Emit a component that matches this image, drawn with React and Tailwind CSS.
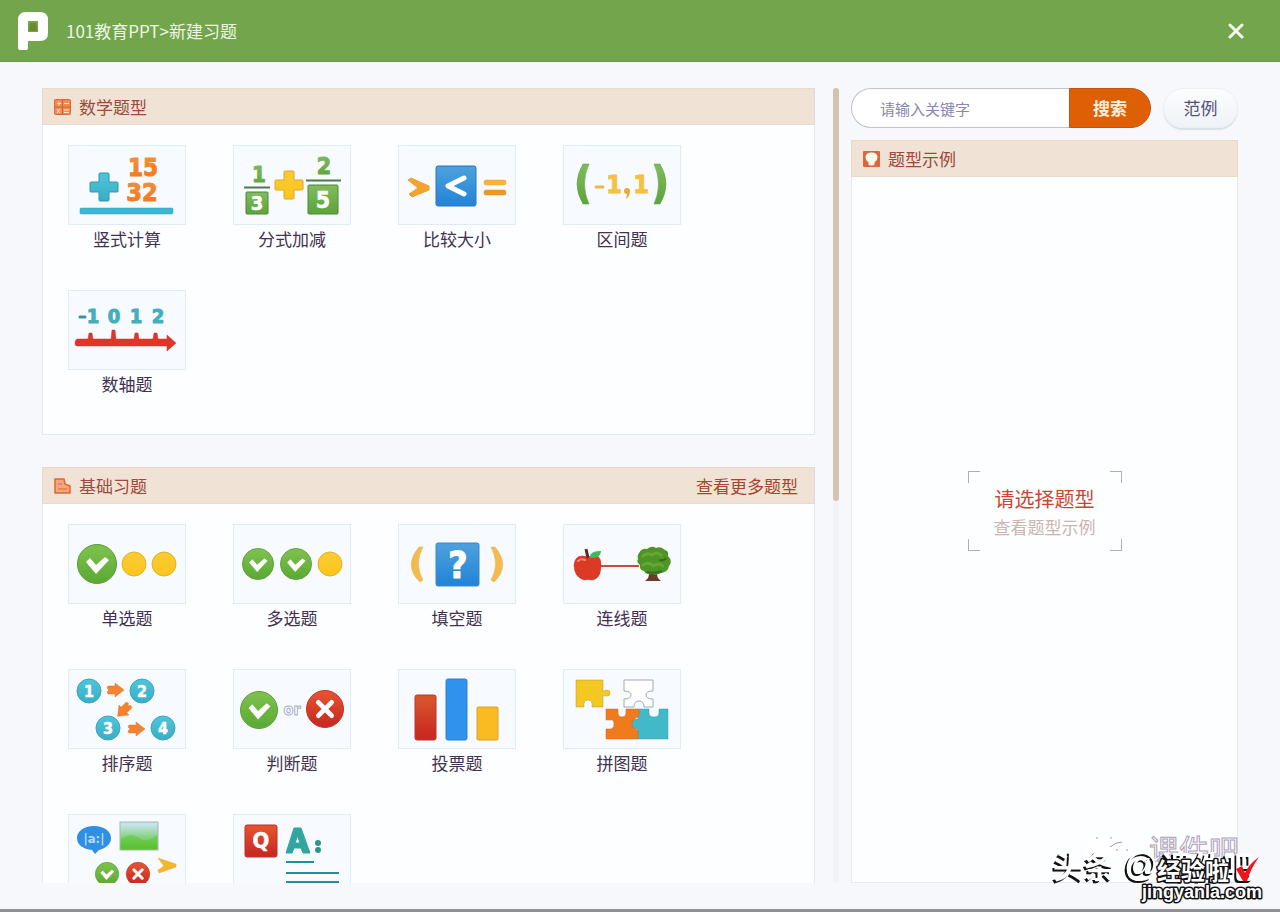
import React, { useState } from 'react'

const digits = { fontFamily: '"DejaVu Sans Condensed", "DejaVu Sans", sans-serif', fontWeight: 700 }

/* ---------- Shared drawing parts ---------- */

const Digit = ({ x, y, size = 20, fill, children, edge = 1 }) => (
    <text
        x={x}
        y={y}
        fontSize={size}
        fill={fill}
        stroke={fill}
        strokeWidth={edge}
        strokeLinejoin="round"
        textAnchor="middle"
        style={digits}
    >
        {children}
    </text>
)

const Plus = ({ x, y, r = 14, fill, stroke }) => (
    <path
        transform={`translate(${x} ${y})`}
        d={`M-5 ${-r + 1}q0-1 1-1h8q1 0 1 1V-5H${r - 1}q1 0 1 1v8q0 1-1 1H5V${r - 1}q0 1-1 1h-8q-1 0-1-1V5H${-r + 1}q-1 0-1-1v-8q0-1 1-1H-5z`}
        fill={fill}
        stroke={stroke}
    />
)

const Check = ({ x, y, r }) => (
    <g transform={`translate(${x} ${y}) scale(${r / 20})`}>
        <circle r="19.5" fill="url(#green)" stroke="#5a9b3c" />
        <path d="M-11-2l4-4 6 7L8-7l4 3-13 14z" fill="#fff" />
    </g>
)

const Cross = ({ x, y, r }) => (
    <g transform={`translate(${x} ${y}) scale(${r / 20})`}>
        <circle r="19.5" fill="url(#red)" stroke="#b8352a" />
        <path d="M-7-7L7 7M7-7L-7 7" stroke="#fff" strokeWidth="5" strokeLinecap="round" />
    </g>
)

const Ball = ({ x, y }) => <circle cx={x} cy={y} r="12" fill="url(#yellow)" stroke="#e2b32a" />

const Step = ({ x, y, n }) => (
    <g>
        <circle cx={x} cy={y} r="12" fill="url(#teal)" stroke="#3fa6bd" />
        <Digit x={x} y={y + 6} size={16} fill="#fff" edge={0.5}>{n}</Digit>
    </g>
)

const StepArrow = ({ x, y, turn = 0 }) => (
    <path
        transform={`translate(${x} ${y}) rotate(${turn})`}
        d="M-8-2l1-2h7v-3l9 7-9 7V4h-7l-1-2 2-2z"
        fill="#f4822f"
        stroke="#e5772a"
        strokeWidth="0.5"
    />
)

/* Gradients used by all of the drawings */
const Gradients = () => (
    <svg width="0" height="0" className="absolute" aria-hidden="true">
        <defs>
            {[
                ['green', '#7cc04c', '#5dab35'],
                ['red', '#e4512f', '#c92a22'],
                ['yellow', '#f9ca34', '#fbc61c'],
                ['teal', '#4cc3d9', '#3bb0c9'],
                ['blue', '#4a9fdc', '#2686d6'],
                ['orange', '#f28e37', '#ef7a22'],
                ['leaf', '#7fb95c', '#5fa63c'],
                ['sky', '#c4e4ea', '#58c22f'],
                ['bar', '#d8532c', '#c92a22'],
            ].map(([id, from, to]) => (
                <linearGradient key={id} id={id} x1="0" y1="0" x2="0" y2="1">
                    <stop offset="0.1" stopColor={from} />
                    <stop offset="0.9" stopColor={to} />
                </linearGradient>
            ))}
        </defs>
    </svg>
)

/* ---------- Question type drawings, 118 x 80 ---------- */

const ColumnSum = () => (
    <>
        <Plus x={36} y={42} fill="url(#teal)" stroke="#3794ac" />
        <Digit x={75} y={31} size={24} fill="url(#orange)">15</Digit>
        <Digit x={74} y={56} size={25} fill="url(#orange)">32</Digit>
        <rect x="12" y="63" width="93" height="6" rx="1" fill="#3db6d3" stroke="#3a9fba" strokeWidth="0.5" />
    </>
)

const Fractions = () => (
    <>
        <Digit x={26} y={37} size={22} fill="url(#leaf)">1</Digit>
        <path d="M11 42.5h26M73 35.5h35" stroke="#4f7a4a" strokeWidth="2" />
        <rect x="13" y="47" width="22" height="22" rx="1" fill="url(#leaf)" stroke="#4d8a35" />
        <Digit x={24} y={65} size={20} fill="#fff" edge={0.5}>3</Digit>
        <Plus x={56} y={40} fill="url(#yellow)" stroke="#dfa52c" />
        <Digit x={91} y={29} size={23} fill="url(#leaf)">2</Digit>
        <rect x="75" y="40" width="30" height="29" rx="1" fill="url(#leaf)" stroke="#4d8a35" />
        <Digit x={90} y={63} size={23} fill="#fff" edge={0.5}>5</Digit>
    </>
)

const Compare = () => (
    <>
        <path d="M10 35l3-2 18 8v4l-17 7-3-3 9-6z" fill="#f5a32d" stroke="#eba134" />
        <rect x="38" y="21" width="40" height="40" rx="2" fill="url(#blue)" stroke="#2b77bd" />
        <path d="M66 33L50 41l16 8" fill="none" stroke="#fff" strokeWidth="5" strokeLinecap="round" strokeLinejoin="round" />
        <rect x="86" y="35" width="22" height="5" rx="2" fill="#f8b33c" stroke="#e5a040" strokeWidth="0.5" />
        <rect x="86" y="45" width="22" height="5" rx="2" fill="#ee9a1f" stroke="#d88c2a" strokeWidth="0.5" />
    </>
)

const Interval = () => (
    <>
        <path d="M20 19h6q-9 20 0 40h-6q-12-20 0-40z" fill="url(#leaf)" stroke="#559a3c" strokeWidth="0.5" />
        <path d="M97 19h-6q9 20 0 40h6q12-20 0-40z" fill="url(#leaf)" stroke="#559a3c" strokeWidth="0.5" />
        <path d="M33 42h7" stroke="#f0b64c" strokeWidth="3" strokeLinecap="round" />
        <Digit x={51} y={48} size={25} fill="#f6c040">1</Digit>
        <path d="M61 46q0-3 3-3t3 3q0 5-4 8l1-5q-3 0-3-3z" fill="#eda838" />
        <Digit x={78} y={48} size={25} fill="#f6c040">1</Digit>
    </>
)

const NumberLine = () => (
    <>
        <path d="M12 27h5" stroke="#3f8f9b" strokeWidth="3" strokeLinecap="round" />
        <Digit x={25} y={33} fill="#45aebc">1</Digit>
        <Digit x={46} y={33} fill="#45aebc">0</Digit>
        <Digit x={68} y={33} fill="#45aebc">1</Digit>
        <Digit x={90} y={33} fill="#45aebc">2</Digit>
        <path
            d="M9 49h11l1-6h3l1 6h18l1-9h3l1 9h18l1-6h3l1 6h14l1-6h3l1 6h9v-4l9 8-9 8v-5H9q-2 0-2-3t2-4z"
            fill="#e1352a"
            stroke="#c63a32"
            strokeWidth="0.5"
        />
    </>
)

const SingleChoice = () => (
    <>
        <Check x={29} y={40} r={20} />
        <Ball x={66} y={40} />
        <Ball x={96} y={40} />
    </>
)

const MultiChoice = () => (
    <>
        <Check x={25} y={40} r={16} />
        <Check x={63} y={40} r={16} />
        <Ball x={97} y={40} />
    </>
)

const FillBlank = () => (
    <>
        <path d="M21 23h4q-9 17 0 33l-3 2q-17-16-1-35z" fill="#f2bb4e" stroke="#e5ae4c" strokeWidth="0.5" />
        <path d="M97 23h-4q9 17 0 33l3 2q17-16 1-35z" fill="#f2bb4e" stroke="#e5ae4c" strokeWidth="0.5" />
        <rect x="38" y="19" width="43" height="43" rx="2" fill="url(#blue)" stroke="#3b88c9" />
        <Digit x={60} y={54} size={37} fill="#fff" edge={1}>?</Digit>
    </>
)

const Matching = () => (
    <>
        <path d="M38 42h38" stroke="#d4453a" strokeWidth="2" />
        <path d="M25 33q13-5 13 8 0 14-9 15-4-1-8 0Q11 53 11 41q1-12 14-8z" fill="#dc3a26" stroke="#b53428" strokeWidth="0.5" />
        <path d="M15 37q3-3 7-1" fill="none" stroke="#f08a6c" strokeWidth="2" strokeLinecap="round" />
        <path d="M25 34l-2-9" stroke="#5c2a22" strokeWidth="3" />
        <path d="M26 34q2-8 12-7 0 8-12 7z" fill="#41b85c" />
        <path d="M86 46q1 8-4 11h16q-5-3-4-11z" fill="#6b3d29" />
        <path
            d="M76 29q3-5 8-4 5-4 9-1 5-2 9 2 4 1 3 6 5 5 1 10-1 6-8 7-5 3-9 1-6 1-8-3-5-1-4-6-4-3-2-6-1-4 1-6z"
            fill="#4f9427"
        />
        <path d="M80 32q4-4 9-1 5-4 9 0M80 41q6-4 10 1 6-4 10 0" fill="none" stroke="#66a633" strokeWidth="3" strokeLinecap="round" />
        <path d="M84 48q8 2 15-1M96 36q6 1 7-2" fill="none" stroke="#356f1f" strokeWidth="2" />
    </>
)

const Ordering = () => (
    <>
        <Step x={21} y={22} n="1" />
        <Step x={74} y={22} n="2" />
        <Step x={40} y={59} n="3" />
        <Step x={95} y={59} n="4" />
        <StepArrow x={47} y={21} />
        <StepArrow x={56} y={41} turn={135} />
        <StepArrow x={68} y={60} />
    </>
)

const TrueFalse = () => (
    <>
        <Check x={26} y={41} r={19} />
        <text x="59" y="46" fontSize="16" fill="#fff" stroke="#aab0c8" textAnchor="middle" style={digits}>or</text>
        <Cross x={92} y={40} r={19} />
    </>
)

const Vote = () => (
    <>
        <rect x="17" y="26" width="21" height="45" rx="2" fill="url(#bar)" stroke="#b23a2a" />
        <rect x="48" y="10" width="21" height="61" rx="2" fill="#2f93ee" stroke="#2f7fcf" />
        <rect x="79" y="38" width="21" height="33" rx="1" fill="#fabb22" stroke="#dd9f2d" />
    </>
)

const Puzzle = () => (
    <>
        <path d="M13 11h27v12q1-2 4-2t3 3-3 3-4-1v12H29q1-7-4-7t-4 7h-8z" fill="#f4c822" stroke="#b9962c" strokeWidth="0.5" />
        <path
            d="M61 11h29v11q-7 0-7 4t7 4v8h-9q0-6-5-6t-5 6H61v-8q7 0 7-4t-7-4z"
            fill="#fff"
            stroke="#a3a8b8"
        />
        <path d="M75 40h11v4q0 4 5 4t5-4v-4h9v30H75V60q-8 0-8-5t8-5z" fill="#41b9c8" stroke="#3c98a5" strokeWidth="0.5" />
        <path d="M43 40h12v4q0 4 4 4t4-4v-4h12q3 4 0 8-6 2-6 7t6 6v9H43V60h4q4 0 4-5t-4-4h-4z" fill="#f17a1c" stroke="#c96a29" strokeWidth="0.5" />
    </>
)

const Mixed = () => (
    <>
        <path d="M26 12c10 0 17 5 17 12 0 6-5 10-12 12l-4 4-3-4C15 35 9 31 9 24c0-7 7-12 17-12z" fill="#2f8fe4" />
        <text x="26" y="29" fontSize="13" fill="#b9dcff" textAnchor="middle" style={digits}>|a:|</text>
        <rect x="52" y="8" width="38" height="28" fill="url(#sky)" stroke="#a9b7ae" strokeWidth="1" />
        <path d="M53 25q10-7 18-1t18-3v14H53z" fill="#5cc531" opacity="0.5" />
        <Check x={39} y={60} r={12} />
        <Cross x={70} y={60} r={12} />
        <path d="M90 44l18 6v3l-17 6-1-3 6-4z" fill="#f6b62c" stroke="#e8a62e" strokeWidth="0.5" />
    </>
)

const ShortAnswer = () => (
    <>
        <rect x="12" y="11" width="32" height="32" rx="2" fill="url(#red)" stroke="#b5352a" />
        <Digit x={28} y={34} size={22} fill="#fff" edge={0.5}>Q</Digit>
        <path fillRule="evenodd" d="M61 14h7l9 25h-7l-2-5h-7l-2 5h-6zM64.500 22l-2.500 7h5z" fill="#32a5a0" stroke="#32a5a0" strokeLinejoin="round" />
        <circle cx="85" cy="29" r="3" fill="#35908f" />
        <circle cx="85" cy="36" r="3" fill="#35908f" />
        <path d="M53 48h28M53 59h53M53 68h53" stroke="#1f9096" strokeWidth="2" />
    </>
)

/* ---------- Section data ---------- */

const mathTypes = [
    { id: 'column', name: '竖式计算', Art: ColumnSum },
    { id: 'fraction', name: '分式加减', Art: Fractions },
    { id: 'compare', name: '比较大小', Art: Compare },
    { id: 'interval', name: '区间题', Art: Interval },
    { id: 'axis', name: '数轴题', Art: NumberLine },
]

const basicTypes = [
    { id: 'single', name: '单选题', Art: SingleChoice },
    { id: 'multi', name: '多选题', Art: MultiChoice },
    { id: 'blank', name: '填空题', Art: FillBlank },
    { id: 'match', name: '连线题', Art: Matching },
    { id: 'order', name: '排序题', Art: Ordering },
    { id: 'judge', name: '判断题', Art: TrueFalse },
    { id: 'vote', name: '投票题', Art: Vote },
    { id: 'puzzle', name: '拼图题', Art: Puzzle },
    { id: 'mixed', Art: Mixed },
    { id: 'answer', Art: ShortAnswer },
]

const MathIcon = () => (
    <svg width="17" height="16" viewBox="0 0 17 16" aria-hidden="true">
        <rect x="0.5" y="0.5" width="16" height="15" rx="1" fill="#ef8a52" stroke="#dd6a35" />
        <path d="M8.5 0v16M0 8h17" stroke="#d8622f" />
        <path d="M3 4.5h4M5 2.5v4M10 4.5h5M3 10l3 4M6 10l-3 4M10 11h5M10 13.5h5" stroke="#f9e4d4" />
    </svg>
)

const PageIcon = () => (
    <svg width="17" height="16" viewBox="0 0 17 16" aria-hidden="true">
        <path d="M1 1h9l1 5 5 2v7H1z" fill="#f3a67c" stroke="#dd6636" strokeWidth="1.5" />
        <path d="M4 6h4M4 11h9" stroke="#dd6636" strokeWidth="1" />
    </svg>
)

const BulbIcon = () => (
    <svg width="17" height="16" viewBox="0 0 17 16" aria-hidden="true">
        <rect width="17" height="16" rx="1" fill="#d9683f" />
        <path d="M8.500 1.500q6 0 6 5 0 3-3 5v2q0 1-3 1t-3-1v-2q-3-2-3-5 0-5 6-5z" fill="#fff6ee" />
    </svg>
)

const PanelHeader = ({ icon, title, children }) => (
    <div className="flex h-[37px] shrink-0 items-center gap-2 border border-[#e8d9cb] bg-[#f0e2d4] pl-[11px] pr-4 text-[17px] text-[#9c4a3c]">
        {icon}
        <h2>{title}</h2>
        {children}
    </div>
)

const TypeCard = ({ id, name, Art, selected, onSelect }) => (
    <button
        type="button"
        aria-label={name || id}
        aria-pressed={selected}
        onClick={onSelect}
        className="flex flex-col items-center gap-1"
    >
        <span className="h-20 w-full border border-[#dfedf3] bg-[#f7fbff]">
            <svg viewBox="1 1 116 78" className="block h-full w-full" aria-hidden="true">
                <Art />
            </svg>
        </span>
        {name && <span className="text-[17px] leading-5 text-[#42324f]">{name}</span>}
    </button>
)

const TypeGrid = ({ types, selected, onSelect }) => (
    <div className="grid grid-cols-[repeat(auto-fill,118px)] gap-x-[47px] gap-y-[41px] border border-t-0 border-[#dfebef] bg-[#fdfeff] pb-10 pl-[25px] pt-5">
        {types.map((type) => (
            <TypeCard
                key={type.id}
                id={type.id}
                name={type.name}
                Art={type.Art}
                selected={selected === type.id}
                onSelect={() => onSelect(type.id)}
            />
        ))}
    </div>
)

/* Stamp in the lower right corner */
const Watermark = () => (
    <div className="pointer-events-none absolute bottom-0 right-0 h-24 w-[240px]">
        <svg viewBox="0 -16 240 96" className="h-full w-full">
            <g fontFamily='"Noto Sans CJK SC", sans-serif'>
                <ellipse cx="62" cy="20" rx="17" ry="14" fill="#fff" />
                <path d="M56 9h2M70 9h2M70 18q6-5 12-5M76 21h2M86 21h2" stroke="#9a9aac" strokeWidth="1" fill="none" />
                <text x="109" y="32" fontSize="30" fill="#fff" stroke="#a99db8" strokeWidth="1">课件吧</text>
                <g fontSize="31" fontWeight="700" fill="#fff" className="[filter:drop-shadow(-2px_2px_0_#111)]">
                    <text x="13" y="49">头条</text>
                    <text x="84" y="47" fontSize="34" fontWeight="400" fontFamily='"Liberation Sans", sans-serif'>@</text>
                    <text x="121" y="49">课件吧</text>
                </g>
                <text x="117" y="51" fontSize="24" fontWeight="700" fill="#fff" stroke="#111" strokeWidth="3" paintOrder="stroke" strokeLinejoin="round">
                    经验啦
                </text>
            </g>
            <path d="M196 40l6-3 3 7q4-9 14-16-8 11-12 24h-4z" fill="#f0141e" />
            <text
                x="102"
                y="69"
                fontSize="18"
                fontWeight="700"
                fill="#fff"
                stroke="#111"
                strokeWidth="3"
                paintOrder="stroke"
                strokeLinejoin="round"
                fontFamily='"Liberation Sans", sans-serif'
            >
                jingyanla.com
            </text>
        </svg>
    </div>
)

const App = () => {
    const [keyword, setKeyword] = useState('')
    const [selected, setSelected] = useState(null)

    return (
        <div className='relative flex h-screen flex-col overflow-hidden border-b-[3px] border-[#929097] bg-[#f7f8fb] font-["Noto_Sans_CJK_SC",sans-serif]'>
            <Gradients />

            {/* Title bar */}
            <header className="flex h-[62px] shrink-0 items-center border-b border-[#6b9650] bg-[#72a54c] pl-[18px] pr-9">
                <svg width="30" height="38" viewBox="0 0 30 38" aria-hidden="true">
                    <path
                        fillRule="evenodd"
                        d="M8 0h14q8 0 8 8v13q0 8-8 8H10v7q0 2-2 2H2q-2 0-2-2V8q0-8 8-8zM10 9v11h10V9z"
                        fill="#fff"
                    />
                    <path d="M12 11h6l1 8h-8z" fill="#6d8a2a" />
                </svg>
                <h1 className="ml-[18px] text-[17px] text-[#edf6e4]">101教育PPT&gt;新建习题</h1>
                <button type="button" aria-label="关闭" className="ml-auto text-[#f4fbea]">
                    <svg width="16" height="16" viewBox="0 0 16 16">
                        <path d="M2 2l12 12M14 2L2 14" stroke="currentColor" strokeWidth="3" strokeLinecap="round" />
                    </svg>
                </button>
            </header>

            <main className="flex min-h-0 flex-1 pb-[26px] pl-[42px] pr-[42px] pt-[26px]">
                {/* Question types */}
                <div className="flex min-w-0 flex-1 flex-col gap-8 overflow-y-auto [scrollbar-width:none]">
                    <section>
                        <PanelHeader icon={<MathIcon />} title="数学题型" />
                        <TypeGrid types={mathTypes} selected={selected} onSelect={setSelected} />
                    </section>
                    <section>
                        <PanelHeader icon={<PageIcon />} title="基础习题">
                            <a href="#more" className="ml-auto text-[#a8442f]">查看更多题型</a>
                        </PanelHeader>
                        <TypeGrid types={basicTypes} selected={selected} onSelect={setSelected} />
                    </section>
                </div>

                {/* Scroll bar */}
                <div className="ml-[18px] mr-3 w-[6px] shrink-0 rounded-full bg-[#f3f3f5]">
                    <div className="h-[52%] rounded-full bg-[#d6c2b1]" />
                </div>

                {/* Search and example */}
                <aside className="flex w-[387px] shrink-0 flex-col">
                    <form className="flex shrink-0 items-center" onSubmit={(e) => e.preventDefault()}>
                        <input
                            type="text"
                            aria-label="关键字"
                            placeholder="请输入关键字"
                            value={keyword}
                            onChange={(e) => setKeyword(e.target.value)}
                            className="h-10 min-w-0 flex-1 rounded-l-full border border-r-0 border-[#c3c3c9] bg-white pl-7 text-[15px] text-[#42324f] outline-none placeholder:text-[#8a86ae]"
                        />
                        <button type="submit" className="h-10 w-[82px] rounded-r-full border border-[#c2560f] bg-[#df5f04] text-[17px] font-bold text-[#fff0dc]">
                            搜索
                        </button>
                        <button type="button" className="ml-3 h-10 w-[75px] rounded-[20px] border border-[#eceff3] bg-linear-to-b from-[#fbfcfe] to-[#eff3f7] text-[17px] text-[#54507a] shadow-[0_2px_1px_#d9e2e6]">
                            范例
                        </button>
                    </form>

                    <section className="mt-3 flex min-h-0 flex-1 flex-col">
                        <PanelHeader icon={<BulbIcon />} title="题型示例" />
                        <div className="flex flex-1 items-center justify-center border border-t-0 border-[#e3eaf0] bg-[#fdfeff] pb-[38px]">
                            <div className="relative flex h-20 w-[154px] flex-col items-center justify-center">
                                <p className="text-xl leading-8 text-[#cb4632]">请选择题型</p>
                                <p className="text-[17px] leading-6 text-[#c9b6ae]">查看题型示例</p>
                                <span className="absolute left-0 top-0 h-3 w-3 border-l border-t border-[#a9b1bb]" />
                                <span className="absolute right-0 top-0 h-3 w-3 border-r border-t border-[#a9b1bb]" />
                                <span className="absolute bottom-0 left-0 h-3 w-3 border-b border-l border-[#a9b1bb]" />
                                <span className="absolute bottom-0 right-0 h-3 w-3 border-b border-r border-[#a9b1bb]" />
                            </div>
                        </div>
                    </section>
                </aside>
            </main>

            <Watermark />
        </div>
    )
}

export default App
